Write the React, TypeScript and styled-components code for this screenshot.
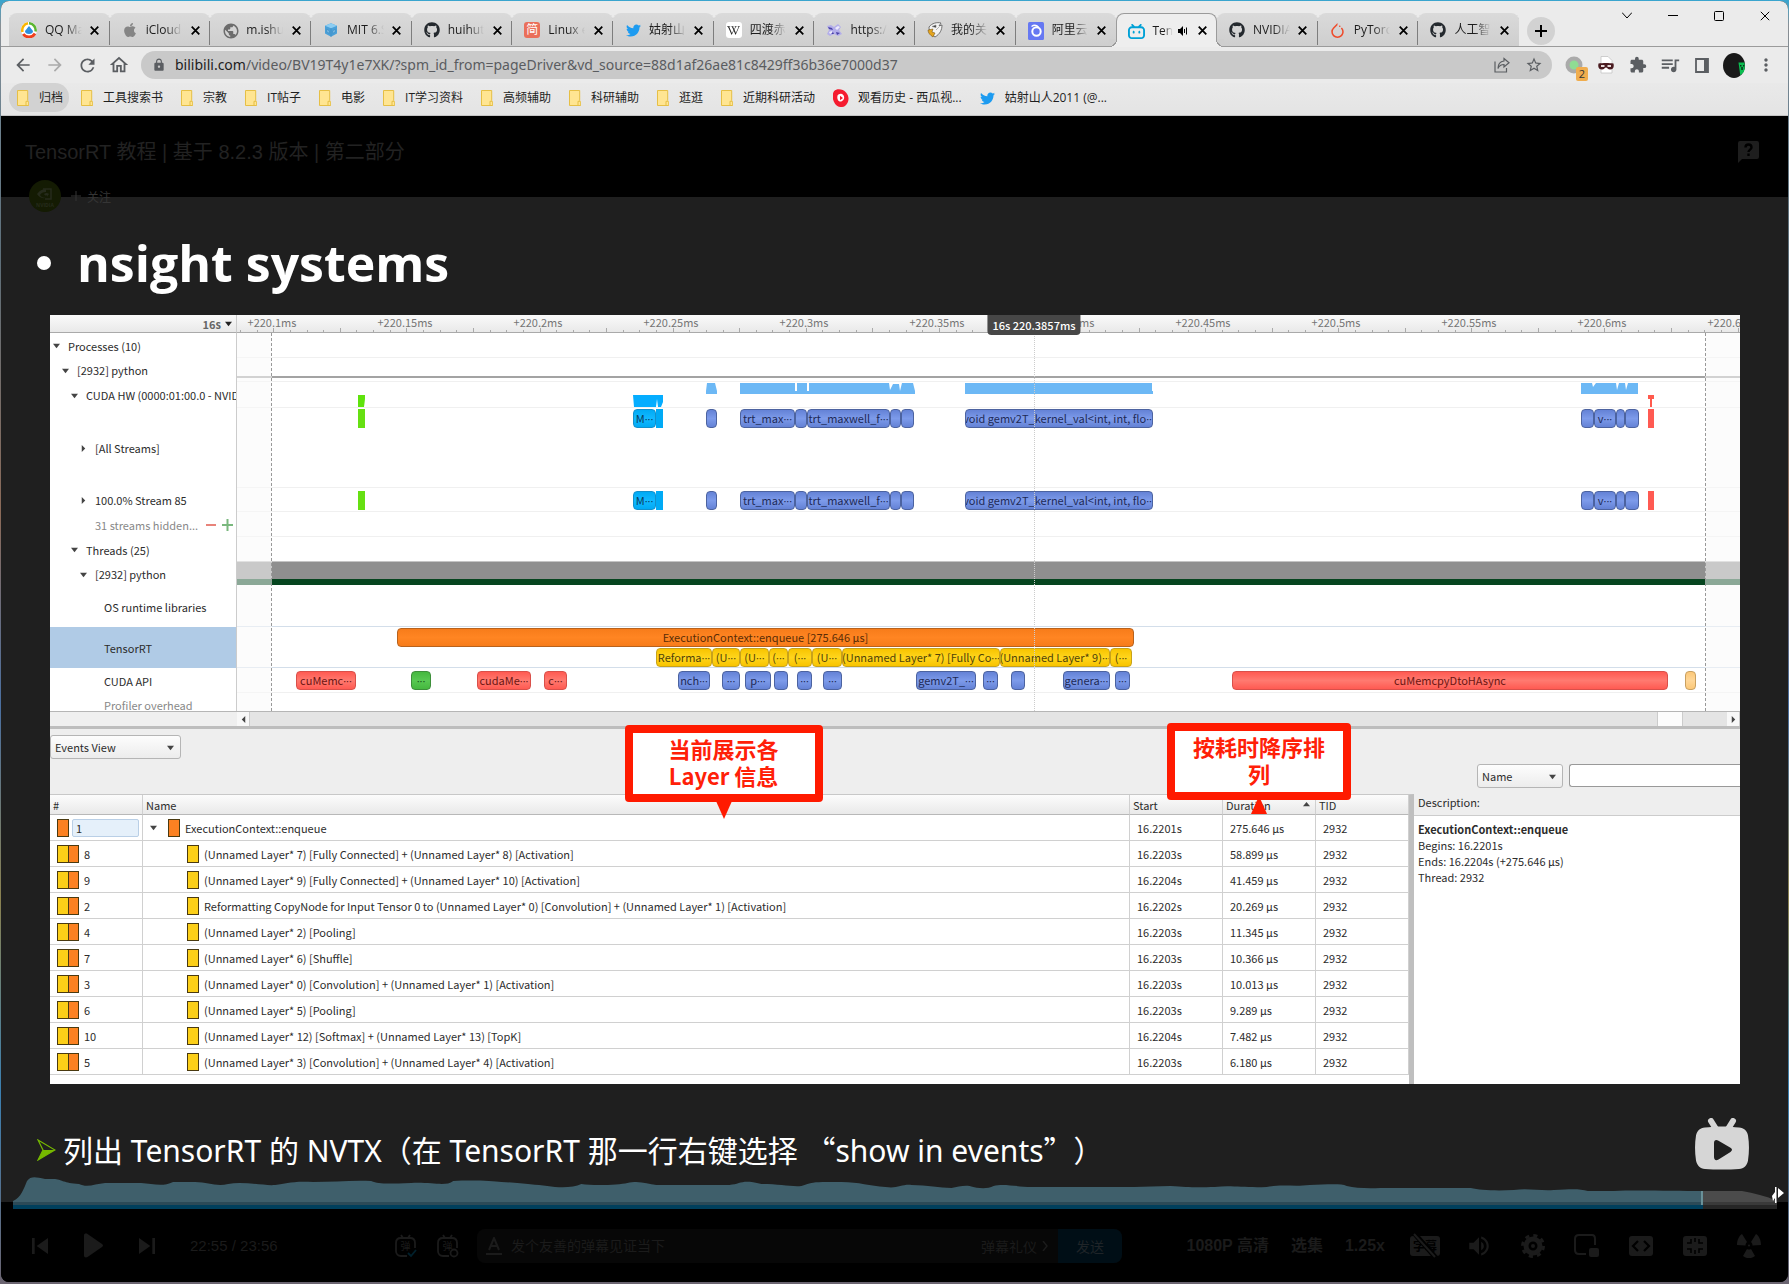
import React from 'react';
import styled, { createGlobalStyle, css } from 'styled-components';
import { FaApple, FaGithub, FaTwitter, FaWikipediaW } from 'react-icons/fa';
import { SiBilibili, SiPytorch } from 'react-icons/si';
import {
  MdArrowBack,
  MdArrowForward,
  MdRefresh,
  MdOutlineHome,
  MdLock,
  MdStarOutline,
  MdExtension,
  MdOutlineQueueMusic,
  MdMoreVert,
  MdPublic,
  MdSkipPrevious,
  MdSkipNext,
  MdVolumeUp,
} from 'react-icons/md';

const uiFont = '"Open Sans", "Noto Sans CJK SC", sans-serif';
const textFont = '"Noto Sans", "Noto Sans CJK SC", sans-serif';
const profilerFont = '"Noto Sans CJK SC", "Noto Sans", sans-serif';
const playerFont = '"Liberation Sans", "Noto Sans CJK SC", sans-serif';

const Global = createGlobalStyle`
  *, *::before, *::after { box-sizing: border-box; }
  html, body { margin: 0; }
  body { font-family: ${uiFont}; font-size: 12px; background: #7d8a94; }
  button, input, select { font: inherit; color: inherit; margin: 0; padding: 0; border: 0; background: none; }
  button { cursor: pointer; }
  svg { display: block; flex: none; }
`;

/* ---------- window and browser chrome ---------- */

const Desktop = styled.div`
  display: flex;
  min-height: 100vh;
  padding: 1px 1px 2px;
  background: linear-gradient(180deg, #38a5cf 0, #8a8f94 2%, #6f8390 8%, #5d6f7a 20%, #8b6a58 40%, #4a6fa0 55%, #8a8150 70%, #3b7fb0 85%, #6b6470 100%);
`;

const Window = styled.div`
  display: flex;
  flex: 1;
  flex-direction: column;
  min-width: 0;
  overflow: hidden;
  border-radius: 8px;
  background: #000;
`;

const TabStrip = styled.div`
  display: flex;
  height: 46px;
  padding-left: 8px;
  align-items: stretch;
  background: #ebebeb;
  box-shadow: inset 0 -1px #9b9b9b;
`;

const Tabs = styled.div`
  display: flex;
  flex: 1;
  min-width: 0;
  padding-top: 12px;
`;

const Tab = styled.div<{ $active?: boolean; $divided?: boolean }>`
  position: relative;
  display: flex;
  flex: 1 1 0;
  min-width: 0;
  max-width: 240px;
  align-items: center;
  padding: 0 7px 0 12px;
  border-radius: 8px 8px 0 0;
  background: linear-gradient(#dadada, #cecece);
  box-shadow: inset 0 -1px #9b9b9b;
  ${p =>
    p.$divided &&
    css`
      &::after {
        content: '';
        position: absolute;
        right: 0;
        top: 8px;
        width: 1px;
        height: 24px;
        background: #7d7d7d;
      }
    `}
  ${p =>
    p.$active &&
    css`
      z-index: 1;
      background: #eeeeee;
      border: 1px solid #9b9b9b;
      border-bottom: 0;
      box-shadow: none;
      padding: 0 6px 0 11px;
      &::before,
      &::after {
        content: '';
        position: absolute;
        bottom: 0;
        width: 8px;
        height: 8px;
      }
      &::before {
        left: -8px;
        background: radial-gradient(circle at 0 0, #cfcfcf 7px, #9b9b9b 7px, #9b9b9b 8px, #eeeeee 8px);
      }
      &::after {
        right: -8px;
        background: radial-gradient(circle at 100% 0, #cfcfcf 7px, #9b9b9b 7px, #9b9b9b 8px, #eeeeee 8px);
      }
    `}
`;

const Favicon = styled.span`
  display: grid;
  flex: none;
  width: 16px;
  height: 16px;
  margin-right: 8px;
  place-items: center;
`;

const Tile = styled.span<{ $bg: string; $fg: string }>`
  display: grid;
  width: 16px;
  height: 16px;
  place-items: center;
  border-radius: 3px;
  background: ${p => p.$bg};
  color: ${p => p.$fg};
  font-size: 12px;
  line-height: 16px;
`;

const TabTitle = styled.span`
  flex: 1;
  min-width: 0;
  margin-right: 5px;
  overflow: hidden;
  white-space: nowrap;
  line-height: 20px;
  color: #1c1c1c;
  mask-image: linear-gradient(90deg, #000 55%, transparent);
`;

const SpeakerIcon = styled.svg`
  margin-right: 6px;
`;

const TabClose = styled.button`
  display: grid;
  flex: none;
  width: 16px;
  height: 16px;
  place-items: center;
`;

const NewTab = styled.button`
  display: grid;
  flex: none;
  align-self: flex-end;
  width: 28px;
  height: 28px;
  margin: 0 49px 2px 8px;
  place-items: center;
  border-radius: 50%;
  background: #d2d2d2;
`;

const WindowButton = styled.button`
  display: grid;
  flex: none;
  width: 46px;
  height: 29px;
  place-items: center;
`;

const Toolbar = styled.div`
  display: flex;
  height: 36px;
  align-items: center;
  padding: 0 6px;
  background: #ebebeb;
  color: #5b5e62;
`;

const ToolButton = styled.button<{ $dim?: boolean }>`
  display: grid;
  flex: none;
  width: 32px;
  height: 28px;
  place-items: center;
  color: ${p => (p.$dim ? '#ababab' : 'inherit')};
`;

const Omnibox = styled.div`
  display: flex;
  flex: 1;
  min-width: 0;
  height: 28px;
  margin: 0 6px;
  align-items: center;
  gap: 9px;
  padding: 0 2px 0 11px;
  border-radius: 14px;
  background: #c9c9c9;
`;

const Address = styled.div`
  flex: 1;
  min-width: 0;
  overflow: hidden;
  white-space: nowrap;
  font-family: ${textFont};
  font-size: 14px;
  line-height: 20px;
  color: #5a5c60;
  b {
    font-weight: 400;
    color: #1d1d1d;
  }
`;

const Badge = styled.span`
  position: absolute;
  right: 2px;
  bottom: -2px;
  width: 12px;
  height: 14px;
  border-radius: 2px;
  background: #f0ad4e;
  color: #333;
  font-size: 11px;
  line-height: 14px;
  text-align: center;
`;

const BadgeAnchor = styled.span`
  position: relative;
  display: grid;
  width: 32px;
  height: 28px;
  place-items: center;
`;

const Bookmarks = styled.nav`
  display: flex;
  height: 33px;
  align-items: flex-start;
  gap: 4px;
  padding-left: 8px;
  background: linear-gradient(#e9e9e9, #e4e4e4);
  border-bottom: 1px solid #c4c4c4;
`;

const Bookmark = styled.a<{ $hover?: boolean; $site?: boolean }>`
  display: flex;
  flex: none;
  height: 29px;
  align-items: center;
  gap: ${p => (p.$site ? 9 : 6)}px;
  padding: 1px 6px 0 8px;
  border-radius: 14px;
  background: ${p => (p.$hover ? '#d2d2d2' : 'transparent')};
  color: #1f1f1f;
  line-height: 20px;
  text-decoration: none;
  white-space: nowrap;
`;

const BookmarkIcon = styled.span`
  display: flex;
  width: 16px;
  height: 16px;
  align-items: center;
`;

/* ---------- player ---------- */

const Stage = styled.main`
  display: flex;
  flex: 1;
  flex-direction: column;
  background: linear-gradient(#000 81px, #1f1f1f 81px, #1f1f1f calc(100% - 80px), #000 calc(100% - 80px));
`;

const VideoHead = styled.header`
  display: flex;
  align-items: center;
  justify-content: space-between;
  height: 64px;
  padding: 8px 29px 0 24px;
  color: #222;
  font-family: ${playerFont};
`;

const VideoTitle = styled.h1`
  margin: 0;
  font-size: 20px;
  font-weight: 400;
  line-height: 28px;
`;

const Uploader = styled.div`
  display: flex;
  align-items: center;
  height: 32px;
  padding-left: 28px;
  gap: 10px;
`;

const FollowButton = styled.button`
  display: flex;
  align-items: center;
  gap: 6px;
  color: #353535;
  font-family: ${playerFont};
  font-size: 12px;
`;

const SlideTitle = styled.h2`
  display: flex;
  align-items: center;
  gap: 26px;
  height: 103px;
  margin: 0;
  padding: 0 36px 2px;
  color: #fff;
  font-family: ${uiFont};
  font-size: 50px;
  font-weight: 700;
  line-height: 64px;
`;

const Bullet = styled.span`
  width: 14px;
  height: 14px;
  border-radius: 50%;
  background: #fff;
`;

const CaptionRow = styled.div`
  display: flex;
  flex: 1;
  align-items: center;
  gap: 7px;
  padding: 30px 39px 0 36px;
`;

const Caption = styled.div`
  display: flex;
  flex: 1;
  align-items: center;
  gap: 7px;
  padding-top: 9px;
  p {
    margin: 0;
    color: #fff;
    font-family: ${textFont};
    font-size: 30px;
    line-height: 44px;
    text-spacing-trim: space-all;
  }
`;

const WideQuote = styled.span`
  font-family: ${profilerFont};
`;

const WaveTrack = styled.div`
  display: grid;
  margin: 0 11px 0 12px;
  > * {
    grid-area: 1 / 1;
    width: 100%;
    height: 33px;
  }
  svg {
    overflow: visible;
  }
  input {
    opacity: 0;
    cursor: pointer;
  }
`;

const Controls = styled.div`
  display: flex;
  height: 73px;
  align-items: center;
  padding: 0 12px 0 16px;
  color: #1b1b1b;
  font-family: ${playerFont};
`;

const ControlButton = styled.button<{ $width: number }>`
  display: grid;
  flex: none;
  width: ${p => p.$width}px;
  height: 32px;
  place-items: center;
`;

const Time = styled.span`
  flex: none;
  width: 214px;
  padding-left: 19px;
  font-size: 15px;
  white-space: nowrap;
`;

const Danmaku = styled.form`
  display: flex;
  flex: 1;
  max-width: 645px;
  height: 34px;
  margin-left: 8px;
  align-items: center;
  overflow: hidden;
  border-radius: 8px;
  background: #070707;
  font-size: 14px;
`;

const FontMark = styled.span`
  display: grid;
  flex: none;
  width: 34px;
  place-items: center;
`;

const DanmakuInput = styled.input`
  flex: 1;
  min-width: 0;
  height: 34px;
  &::placeholder {
    color: #1b1b1b;
    opacity: 1;
  }
`;

const Etiquette = styled.a`
  display: flex;
  align-items: center;
  gap: 5px;
  padding-right: 10px;
  color: #1b1b1b;
  text-decoration: none;
`;

const Send = styled.button`
  width: 64px;
  height: 34px;
  background: #000e16;
  color: #1f2428;
`;

const RightControls = styled.div`
  display: flex;
  flex: none;
  align-items: center;
  margin-left: auto;
`;

const TextControls = styled.div`
  display: flex;
  gap: 22px;
  margin-right: 13px;
`;

const TextControl = styled.button`
  flex: none;
  font-size: 16px;
  font-weight: 700;
  line-height: 24px;
`;

/* ---------- profiler ---------- */

const Profiler = styled.section`
  position: relative;
  margin: 0 48px 0 49px;
  background: #eee;
  color: #2c2c2c;
  font-family: ${profilerFont};
  font-size: 11px;
  line-height: 16px;
`;

const SplitRow = styled.div`
  display: flex;
`;

const RulerCorner = styled.div`
  display: flex;
  flex: none;
  width: 187px;
  height: 18px;
  align-items: center;
  justify-content: flex-end;
  gap: 4px;
  padding-right: 4px;
  border-right: 1px solid #ccc;
  border-bottom: 1px solid #aaa;
  background: linear-gradient(#fafafa, #e9e9e9);
  color: #666;
  font-weight: 700;
`;

const Ruler = styled.div`
  position: relative;
  flex: 1;
  height: 18px;
  overflow: hidden;
  border-bottom: 1px solid #aaa;
  background: linear-gradient(#fafafa, #e9e9e9);
`;

const RulerLabel = styled.span`
  position: absolute;
  top: 0;
  transform: translateX(-50%);
  color: #757575;
  line-height: 14px;
`;

const Tick = styled.i<{ $h: number }>`
  position: absolute;
  bottom: 0;
  width: 1px;
  height: ${p => p.$h}px;
  background: #aaa;
`;

const CursorTime = styled.span`
  position: absolute;
  z-index: 2;
  top: 0;
  height: 20px;
  padding: 0 5px;
  transform: translateX(-50%);
  border-radius: 0 0 4px 4px;
  background: #474747;
  color: #fff;
  font-weight: 500;
  line-height: 20px;
  white-space: nowrap;
`;

const Tree = styled.div`
  flex: none;
  width: 187px;
  height: 378px;
  overflow: hidden;
  border-right: 1px solid #ccc;
  background: #fff;
`;

const TreeRow = styled.div<{ $h: number; $depth: number; $selected?: boolean; $dim?: boolean }>`
  display: flex;
  height: ${p => p.$h}px;
  align-items: center;
  gap: 8px;
  padding-left: ${p => 2 + p.$depth * 9}px;
  background: ${p => (p.$selected ? '#b0cbe6' : 'transparent')};
  color: ${p => (p.$dim ? '#888' : '#2c2c2c')};
  white-space: nowrap;
`;

const Twisty = styled.span`
  display: grid;
  flex: none;
  width: 8px;
  place-items: center;
`;

const Lanes = styled.div`
  position: relative;
  flex: 1;
  height: 378px;
  overflow: hidden;
  background: #fff;
`;

const Lane = styled.div<{ $h: number; $line: string }>`
  position: relative;
  height: ${p => p.$h}px;
  border-bottom: 1px solid ${p => p.$line};
`;

const barColors = {
  blue: ['#6482d6', '#7d9bea', '#4c63a0', '#1e2a57'],
  green: ['#45b83f', '#58c852', '#3d8f3a', '#15501a'],
  lime: ['#66e012', '#66e012', '#66e012', '#15501a'],
  red: ['#ff5a52', '#ff7a70', '#d9504a', '#6b1512'],
  orange: ['#f77c1a', '#ff8522', '#b8621c', '#5a2c05'],
  yellow: ['#f8c400', '#ffd51c', '#c8a21a', '#4f4208'],
  cream: ['#fcc878', '#ffd798', '#c9a060', '#6b4a10'],
  cyan: ['#00aaf5', '#12b9ff', '#1290cc', '#073c60'],
};

type BarColor = keyof typeof barColors;

const Bar = styled.span<{ $c: BarColor; $top: number; $flat?: boolean }>`
  position: absolute;
  top: ${p => p.$top}px;
  display: flex;
  height: 19px;
  align-items: center;
  justify-content: center;
  overflow: hidden;
  color: ${p => barColors[p.$c][3]};
  line-height: 17px;
  white-space: nowrap;
  ${p =>
    p.$flat
      ? css`
          background: ${barColors[p.$c][0]};
        `
      : css`
          border: 1px solid ${barColors[p.$c][2]};
          border-radius: 4px;
          background: linear-gradient(${barColors[p.$c][0]}, ${barColors[p.$c][1]} 50%, ${barColors[p.$c][0]});
        `}
`;

/* The dots sit at half height and stay narrow, so they use the Latin family. */
const Dots = styled.span`
  font-family: ${uiFont};
`;

const LoadLine = styled.div`
  height: 20px;
  border-bottom: 2px solid #a3a3a3;
`;

const CpuBand = styled.div`
  height: 17px;
  background: #8f8f8f;
`;

const StateBand = styled.div`
  height: 6px;
  background: #06451f;
`;

const Utilization = styled.svg`
  width: 100%;
  height: 25px;
`;

const Outside = styled.div<{ $side: 'left' | 'right' }>`
  position: absolute;
  top: 0;
  bottom: 0;
  ${p => p.$side}: 0;
  width: 35px;
  border-${p => (p.$side === 'left' ? 'right' : 'left')}: 1px dashed #999;
  background: rgba(250, 250, 250, 0.55);
`;

const CursorLine = styled.div`
  position: absolute;
  top: 0;
  bottom: 0;
  border-left: 1px dotted #ccc;
`;

const ScrollCorner = styled.div`
  flex: none;
  width: 187px;
`;

const ScrollRow = styled.div`
  display: flex;
  height: 18px;
  border-top: 1px solid #b5b5b5;
  border-bottom: 3px solid #bdbdbd;
  background: #efefef;
`;

const ScrollTrack = styled.div`
  flex: 1;
  background: #e4e4e4;
`;

const ScrollGap = styled.div`
  flex: none;
  width: 44px;
  background: #e4e4e4;
`;

const ScrollThumb = styled.div`
  flex: none;
  width: 26px;
  border: solid #ccc;
  border-width: 0 1px;
  background: #fcfcfc;
`;

const ScrollButton = styled.button`
  display: grid;
  flex: none;
  width: 13px;
  place-items: center;
  border-right: 1px solid #ccc;
  background: #f8f8f8;
`;

const EventsBar = styled.div`
  display: flex;
  height: 65px;
  justify-content: space-between;
  padding-top: 6px;
`;

const Filters = styled.div`
  display: flex;
  gap: 6px;
  padding-top: 29px;
`;

const Combo = styled.label<{ $w: number }>`
  display: grid;
  width: ${p => p.$w}px;
  height: 24px;
  align-items: center;
  border: 1px solid #b5b5b5;
  border-radius: 3px;
  background: linear-gradient(#fdfdfd, #ececec);
  select,
  svg {
    grid-area: 1 / 1;
  }
  select {
    width: 100%;
    height: 22px;
    padding: 0 4px;
    appearance: none;
  }
  svg {
    justify-self: end;
    margin-right: 6px;
    pointer-events: none;
  }
`;

const FilterInput = styled.input`
  width: 171px;
  height: 23px;
  border: 1px solid #999;
  border-right: 0;
  border-radius: 3px 0 0 3px;
  background: #fff;
`;

const EventsArea = styled.div`
  display: grid;
  grid-template-columns: minmax(0, 1fr) 326px;
  min-height: 290px;
`;

const TableWrap = styled.div`
  border-top: 1px solid #c8c8c8;
  border-right: 5px solid #bfbfbf;
  background: #fff;
`;

const Table = styled.table`
  width: 100%;
  border-spacing: 0;
  table-layout: fixed;
  th {
    height: 20px;
    padding: 0 2px 0 3px;
    border-right: 1px solid #d0d0d0;
    border-bottom: 1px solid #b8b8b8;
    background: linear-gradient(#fcfcfc, #e9e9e9);
    font-weight: 400;
    text-align: left;
  }
  td {
    height: 26px;
    padding: 0 7px;
    border-right: 1px solid #d0d0d0;
    border-bottom: 1px solid #d0d0d0;
    white-space: nowrap;
  }
`;

const Cell = styled.div<{ $indent?: number; $gap?: number }>`
  display: flex;
  align-items: center;
  gap: ${p => p.$gap ?? 5}px;
  padding-left: ${p => p.$indent ?? 0}px;
`;

const SortHead = styled.div`
  display: flex;
  align-items: center;
  justify-content: space-between;
  padding-right: 3px;
`;

const Swatches = styled.span`
  display: flex;
  flex: none;
  border: 1px solid #4a3a10;
`;

const Swatch = styled.i<{ $c: string }>`
  width: 10px;
  height: 16px;
  background: ${p => p.$c};
  & + & {
    border-left: 1px solid #4a3a10;
  }
`;

const RowNumber = styled.input`
  width: 67px;
  height: 18px;
  padding-left: 3px;
  border: 1px solid #b9cfe6;
  border-radius: 2px;
  background: #e5f0fa;
`;

const Description = styled.div`
  display: flex;
  flex-direction: column;
`;

const DescriptionLabel = styled.div`
  height: 22px;
  padding: 0 4px;
  border-bottom: 1px solid #ccc;
`;

const DescriptionBody = styled.div`
  flex: 1;
  padding: 5px 4px;
  background: #fff;
`;

const Callout = styled.div<{ $w: number }>`
  position: absolute;
  z-index: 3;
  width: ${p => p.$w}px;
  height: 77px;
  padding: 2px 16px;
  border: 8px solid #ff1a00;
  border-radius: 4px;
  background: #fff;
  color: #ff2008;
  font-size: 22px;
  font-weight: 700;
  line-height: 27px;
  text-align: center;
`;

const Pointer = styled.i<{ $dir: 'up' | 'down' }>`
  position: absolute;
  top: ${p => (p.$dir === 'down' ? 68 : 65)}px;
  left: calc(50% - 8px);
  border: 8px solid transparent;
  ${p => (p.$dir === 'down' ? 'border-top: 18px solid #ff1a00; border-bottom: 0;' : 'border-bottom: 18px solid #ff1a00; border-top: 0;')}
`;

const CalloutLeft = styled(Callout)`
  top: 410px;
  left: 34%;
`;

const CalloutRight = styled(Callout)`
  top: 408px;
  left: 66.1%;
`;

const CursorAnchor = styled.div`
  position: absolute;
  z-index: 2;
  top: 0;
  left: 187px;
  right: 0;
`;

/* ---------- data ---------- */

/* Width of the visible time range, in the units used by the bars below. */
const SPAN = 1503;
const pct = (v: number) => `${(v / SPAN) * 100}%`;

type BarData = [start: number, end: number, color: BarColor, label?: string, flat?: boolean];

const kernelBars: BarData[] = [
  [121, 128, 'lime', '', true],
  [396, 419, 'cyan', 'M···'],
  [419, 426, 'cyan', '', true],
  [469, 480, 'blue'],
  [503, 558, 'blue', 'trt_max···'],
  [558, 570, 'blue'],
  [570, 653, 'blue', 'trt_maxwell_f···'],
  [653, 664, 'blue'],
  [664, 677, 'blue'],
  [728, 916, 'blue', 'void gemv2T_kernel_val<int, int, flo···'],
  [1344, 1357, 'blue'],
  [1357, 1379, 'blue', 'v···'],
  [1379, 1388, 'blue'],
  [1388, 1402, 'blue'],
  [1411, 1417, 'red', '', true],
];

const trtBars: BarData[] = [[160, 897, 'orange', 'ExecutionContext::enqueue [275.646 µs]']];

const layerBars: BarData[] = [
  [419, 475, 'yellow', 'Reforma···'],
  [475, 503, 'yellow', '(U···'],
  [503, 532, 'yellow', '(U···'],
  [532, 551, 'yellow', '(···'],
  [551, 575, 'yellow', '(···'],
  [575, 605, 'yellow', '(U···'],
  [605, 763, 'yellow', '(Unnamed Layer* 7) [Fully Co···'],
  [763, 873, 'yellow', '(Unnamed Layer* 9)···'],
  [873, 895, 'yellow', '(···'],
];

const apiBars: BarData[] = [
  [59, 119, 'red', 'cuMemc···'],
  [174, 194, 'green', '···'],
  [240, 294, 'red', 'cudaMe···'],
  [307, 330, 'red', 'c···'],
  [441, 473, 'blue', 'nch···'],
  [485, 503, 'blue', '···'],
  [508, 534, 'blue', 'p···'],
  [537, 551, 'blue'],
  [560, 575, 'blue', '···'],
  [586, 605, 'blue', '···'],
  [679, 739, 'blue', 'gemv2T_···'],
  [746, 761, 'blue', '···'],
  [774, 788, 'blue'],
  [826, 873, 'blue', 'genera···'],
  [878, 893, 'blue', '···'],
  [995, 1431, 'red', 'cuMemcpyDtoHAsync'],
  [1448, 1459, 'cream'],
];

const treeRows = [
  { h: 25, depth: 0, label: 'Processes (10)', open: true },
  { h: 24, depth: 1, label: '[2932] python', open: true },
  { h: 26, depth: 2, label: 'CUDA HW (0000:01:00.0 - NVIDIA', open: true },
  { h: 80, depth: 3, label: '[All Streams]', open: false },
  { h: 24, depth: 3, label: '100.0% Stream 85', open: false },
  { h: 25, depth: 3, label: '31 streams hidden...', dim: true, extra: true },
  { h: 25, depth: 2, label: 'Threads (25)', open: true },
  { h: 24, depth: 3, label: '[2932] python', open: true },
  { h: 41, depth: 4, label: 'OS runtime libraries' },
  { h: 41, depth: 4, label: 'TensorRT', selected: true },
  { h: 25, depth: 4, label: 'CUDA API' },
  { h: 24, depth: 4, label: 'Profiler overhead', dim: true },
];

const rulerLabels = [
  '+220.1ms', '+220.15ms', '+220.2ms', '+220.25ms', '+220.3ms', '+220.35ms',
  '+220.4ms', '+220.45ms', '+220.5ms', '+220.55ms', '+220.6ms', '+220.65ms',
];

const events = [
  ['8', '(Unnamed Layer* 7) [Fully Connected] + (Unnamed Layer* 8) [Activation]', '16.2203s', '58.899 µs'],
  ['9', '(Unnamed Layer* 9) [Fully Connected] + (Unnamed Layer* 10) [Activation]', '16.2204s', '41.459 µs'],
  ['2', 'Reformatting CopyNode for Input Tensor 0 to (Unnamed Layer* 0) [Convolution] + (Unnamed Layer* 1) [Activation]', '16.2202s', '20.269 µs'],
  ['4', '(Unnamed Layer* 2) [Pooling]', '16.2203s', '11.345 µs'],
  ['7', '(Unnamed Layer* 6) [Shuffle]', '16.2203s', '10.366 µs'],
  ['3', '(Unnamed Layer* 0) [Convolution] + (Unnamed Layer* 1) [Activation]', '16.2203s', '10.013 µs'],
  ['6', '(Unnamed Layer* 5) [Pooling]', '16.2203s', '9.289 µs'],
  ['10', '(Unnamed Layer* 12) [Softmax] + (Unnamed Layer* 13) [TopK]', '16.2204s', '7.482 µs'],
  ['5', '(Unnamed Layer* 3) [Convolution] + (Unnamed Layer* 4) [Activation]', '16.2203s', '6.180 µs'],
];

/* ---------- icons ---------- */

const Cross = ({ size = 9, weight = 2 }: { size?: number; weight?: number }) => (
  <svg width={size} height={size} viewBox="0 0 10 10" stroke="#000" strokeWidth={weight} fill="none">
    <path d="M.8.8l8.4 8.4M9.2.8L.8 9.2" />
  </svg>
);

const Caret = ({ dir = 'down', size = 7, color = '#444' }: { dir?: 'down' | 'right' | 'left' | 'up'; size?: number; color?: string }) => (
  <svg width={size} height={size} viewBox="0 0 8 8" fill={color}>
    <path d={{ down: 'M0 2h8L4 7z', up: 'M0 6h8L4 1z', right: 'M2 0v8l4-4z', left: 'M6 0v8L2 4z' }[dir]} />
  </svg>
);

const Folder = () => (
  <svg width="12" height="16" viewBox="0 0 12 16">
    <path d="M.5.5h10.2v10l1 1v4H.5z" fill="#ffe592" stroke="#e6bf45" />
    <path d="M9 15.500v-4.200h2" fill="none" stroke="#e6bf45" />
  </svg>
);

const QqMail = () => (
  <svg width="16" height="16" viewBox="0 0 16 16" fill="none">
    <circle cx="8" cy="8" r="8" fill="#fff" />
    <path d="M1.500 10A7 7 0 0 1 7 1.300" stroke="#fbb500" strokeWidth="2.500" />
    <path d="M8 1.200A7 7 0 0 1 14.500 9.500" stroke="#5cb531" strokeWidth="2.500" />
    <path d="M14 11.500A7 7 0 0 1 2.200 12" stroke="#f0401e" strokeWidth="2.800" />
    <path d="M8 4l4 5a4 3 0 0 1-8 0z" fill="#2b8fe0" />
  </svg>
);

const Cube = () => (
  <svg width="12" height="14" viewBox="0 0 14 16">
    <path d="M7 0l7 3v9l-7 4-7-4V3z" fill="#4aa0d8" />
    <path d="M7 0l7 3-7 3-7-3z" fill="#8ccdf2" />
    <path d="M7 6v10M2 7l3 2v3l-3-2zM9 9l3-2v3l-3 2z" stroke="#3a88c0" fill="#7fc0e8" strokeWidth=".7" />
  </svg>
);

const Flower = () => (
  <svg width="16" height="14" viewBox="0 0 16 14">
    <path d="M1 3l4-1 3 2 4-3 3 3-2 3 3 4-4 2-4-2-4 2-3-2 2-4z" fill="#b3aeea" />
    <path d="M2 4l4 1 1 2-4-1zM10 9l4 1-3 2zM5 11l2-2 1 2z" fill="#4b42a8" />
    <path d="M9 5l3-2 2 1-3 3zM3 9l3-1 0 2-2 1z" fill="#eceafb" />
  </svg>
);

const Bird = () => (
  <svg width="16" height="16" viewBox="0 0 16 16">
    <path d="M2 5c3-4 8-5 12-4l-2 3 3-1c0 5-2 9-7 12-3-2-6-5-6-10z" fill="#f3f3f3" stroke="#666" strokeWidth=".9" />
    <path d="M1 8l5-1-1 3 3 1-2 4c-3-2-5-4-5-7z" fill="#e5a51e" stroke="#6a4a10" strokeWidth=".5" />
    <path d="M5 4.500l4-1.500v2.500zM9 8l3-3" fill="#333" stroke="#888" strokeWidth=".6" />
  </svg>
);

const Aliyun = () => (
  <svg width="16" height="18" viewBox="0 0 16 18" fill="none">
    <rect width="16" height="18" rx="1.500" fill="#6678f2" />
    <circle cx="8.500" cy="9.500" r="4.200" stroke="#fff" strokeWidth="2" />
    <path d="M3.500 4.500c2-1.500 5-1.500 7 .5" stroke="#fff" strokeWidth="1.400" />
  </svg>
);

const Xigua = () => (
  <svg width="16" height="18" viewBox="0 0 16 16" preserveAspectRatio="none">
    <path d="M1 2c3-3 9-2 12 1 4 4 3 9-1 12-3 2-8 1-10-2-3-4-3-8-1-11z" fill="#f51c30" />
    <path d="M5 5c2-1 4-1 5 0 2 2 1 4 0 5-2 2-4 1-5 0-1-2-1-4 0-5z" fill="#fff" />
    <path d="M7 6l3 2-3 2z" fill="#f51c30" />
  </svg>
);

const Share = () => (
  <svg width="16" height="16" viewBox="0 0 16 16" fill="none" stroke="#5b5e62" strokeWidth="1.200">
    <path d="M1 4.500v10.500h11.500v-4" />
    <path d="M10 1.500l5 4.200-5 4.200V7.500C7 7.500 5 9 4 11.500c0-4 2-7 6-7.500z" />
  </svg>
);

const SidePanel = () => (
  <svg width="14" height="15" viewBox="0 0 14 15">
    <path d="M1 1h12v13H1z" fill="none" stroke="#5b5e62" strokeWidth="1.800" />
    <path d="M9 1h4v13H9z" fill="#5b5e62" />
  </svg>
);

const Masked = () => (
  <svg width="16" height="18" viewBox="0 0 16 18">
    <path d="M3 .5h7l4 4V17H3z" fill="#fff" stroke="#c4c4c4" strokeWidth=".8" />
    <path d="M.5 7.500c4-.8 11-.8 15 0 .8 4-.2 6-3.500 6-2 0-3-2-4-2s-2 2-4 2c-3.300 0-4.300-2-3.500-6z" fill="#4a1b20" />
    <path d="M3 10h3.500M9.500 10H13" stroke="#e6dada" strokeWidth="2" />
  </svg>
);

const ProfileFace = () => (
  <svg width="22" height="25" viewBox="0 0 22 25">
    <ellipse cx="11" cy="12.500" rx="11" ry="12.500" fill="#191919" />
    <path d="M15.500 9.500h5.800c.8 3.500.6 7-1 10l-3 3z" fill="#0bbd50" />
    <path d="M17 12h1.500v1.500H17zM20 12h1.200v1.500H20zM18.300 14h1.500v3h-1.500z" fill="#0a3018" />
  </svg>
);

const HelpBubble = () => (
  <svg width="21" height="22" viewBox="0 0 21 22">
    <path d="M2 0h17a2 2 0 0 1 2 2v14a2 2 0 0 1-2 2H4l-4 4V2a2 2 0 0 1 2-2z" fill="#1e1e1e" />
    <path d="M7.500 6.500c0-4 6-4 6 0 0 2-3 2.200-3 4.500M10.500 12.500V15" fill="none" stroke="#000" strokeWidth="2.400" />
  </svg>
);

const Nvidia = () => (
  <svg width="32" height="32" viewBox="0 0 32 32">
    <circle cx="16" cy="16" r="16" fill="#141b03" />
    <path d="M8 14c3-4 6-5 9-5v3c-3 0-5 1-6 3 2 3 5 4 8 1-2-1-3 0-4-2 3-2 5 0 5 0-3 6-9 5-12 0z" fill="#262b1c" />
    <path d="M14 9h8v10h-6" fill="none" stroke="#262b1c" strokeWidth="1.500" />
    <text x="16" y="27" textAnchor="middle" fontSize="5" fontWeight="700" fill="#262b1c">NVIDIA</text>
  </svg>
);

const ListArrow = () => (
  <svg width="19" height="22" viewBox="0 0 19 22">
    <path d="M1 1l17 10L1 21l5-10z" fill="none" stroke="#76b900" strokeWidth="1.200" />
    <path d="M6 11h12L1 21z" fill="#76b900" />
  </svg>
);

const TvLogo = () => (
  <svg width="54" height="54" viewBox="0 0 54 54">
    <path d="M16 3l5 8M38 3l-5 8" stroke="#d6d6d6" strokeWidth="6" strokeLinecap="round" />
    <path
      fillRule="evenodd"
      d="M10 9.500C20 8 34 8 44 9.500c5 .5 8 3 9 8 1.300 8 1.300 16 0 25-.8 5-4 8-9 8.500-10 .8-24 .8-34 0-5-.5-8-3.500-9-8.500-1.300-9-1.300-17 0-25 1-5 4-7.500 9-8zM19 25v14c0 3 2 4 4.500 2.500l12-7.500c2-1.300 2-3 0-4.300l-12-7C21 21.200 19 22 19 25z"
      fill="#d6d6d6"
    />
  </svg>
);

const PlayIcon = () => (
  <svg width="19" height="25" viewBox="0 0 19 25">
    <path d="M0 2.500C0 .5 2 0 3.500 1L18 11c1.300 1 1.300 2 0 3L3.500 24C2 25 0 24.500 0 22.500z" fill="#1b1b1b" />
  </svg>
);

const DanmakuIcon = ({ mark }: { mark: 'check' | 'gear' }) => (
  <svg width="22" height="24" viewBox="0 0 22 24" fill="none" stroke="#1b1b1b" strokeWidth="1.800">
    <path d="M12 22H6c-3 0-5-2-5-5V9c0-3 2-5 5-5h9c3 0 5 2 5 5v5M6 1l2 3M15 1l-2 3" />
    <text x="10.500" y="16" textAnchor="middle" fontSize="10" fill="#1b1b1b" stroke="none">弹</text>
    {mark === 'check' ? <path d="M13 19l3 3 5-6" stroke="#00202c" /> : <circle cx="17" cy="19" r="3.500" />}
  </svg>
);

const SubtitleOff = () => (
  <svg width="30" height="26" viewBox="0 0 30 26">
    <rect y="3" width="30" height="20" rx="3" fill="#1b1b1b" />
    <text x="15" y="18" textAnchor="middle" fontSize="12" fontWeight="700" fill="#000">字幕</text>
    <path d="M4 0l22 25" stroke="#000" strokeWidth="5" />
    <path d="M4 1l21 23" stroke="#1b1b1b" strokeWidth="2" />
  </svg>
);

const GearIcon = () => (
  <svg width="24" height="24" viewBox="0 0 24 24">
    <circle cx="12" cy="12" r="10.500" fill="none" stroke="#1b1b1b" strokeWidth="3" strokeDasharray="4.100 4.147" />
    <circle cx="12" cy="12" r="7" fill="none" stroke="#1b1b1b" strokeWidth="5" />
    <circle cx="12" cy="12" r="2" fill="#1b1b1b" />
  </svg>
);

const PipIcon = () => (
  <svg width="26" height="24" viewBox="0 0 26 24" fill="none" stroke="#1b1b1b" strokeWidth="2">
    <path d="M12 20H5c-2 0-4-1-4-4V5c0-3 2-4 4-4h13c2 0 3 1 3 4v6" />
    <rect x="15" y="14" width="10" height="9" rx="2" fill="#1b1b1b" stroke="none" />
  </svg>
);

const WideIcon = () => (
  <svg width="24" height="20" viewBox="0 0 24 20">
    <rect width="24" height="20" rx="3" fill="#1b1b1b" />
    <path d="M9 5l-5 5 5 5M15 5l5 5-5 5" fill="none" stroke="#000" strokeWidth="2.200" />
  </svg>
);

const GridIcon = () => (
  <svg width="24" height="20" viewBox="0 0 24 20">
    <rect width="24" height="20" rx="3" fill="#1b1b1b" />
    <path d="M4 7h4V3M20 7h-4V3M4 13h4v4M20 13h-4v4M12 2v4M12 14v4" fill="none" stroke="#000" strokeWidth="1.600" />
  </svg>
);

const FanIcon = () => (
  <svg width="24" height="24" viewBox="0 0 24 24" fill="#1b1b1b">
    <path d="M5 0l5 8c-1 1-1.500 2-1.500 3.500L0 11C0 6 2 2 5 0zM19 0l-5 8c1 1 1.500 2 1.500 3.500L24 11c0-5-2-9-5-11zM10 15c1 .8 3 .8 4 0l4 7c-4 3-8 3-12 0z" />
    <circle cx="12" cy="11.500" r="1" />
  </svg>
);

const wavePoints =
  'M0 25C8 22 11 12 14 5C18 0 22 1 32 3H42C50 4 50 7 66 8C74 12 82 8 92 7H128C140 8 150 11 160 6H182C195 6 203 11 215 8C230 5 250 10 262 9C274 8 276 5 300 6C320 6 340 4 358 5C366 8 372 8 398 7C420 6 432 11 440 5C460 4 480 5 488 6C510 7 522 9 534 10C546 12 560 12 568 8C580 10 606 9 614 7C626 4 634 8 643 9H716C728 8 728 3 748 8C766 8 778 11 788 10C800 5 806 6 828 6C846 6 856 10 872 11C884 13 888 8 898 9C914 9 926 12 938 12C944 11 950 9 956 10C966 13 974 13 980 10C990 7 1004 11 1018 11H1088C1110 11 1130 11 1157 10C1180 12 1190 11 1201 11C1218 9 1230 12 1253 11C1268 8 1280 11 1296 9C1310 9 1326 7 1333 10C1344 13 1358 12 1378 12H1457C1466 14 1480 15 1500 14C1514 12 1526 15 1540 14C1560 13 1566 13 1574 15H1600C1620 14 1660 15 1689 15H1728C1740 17 1752 20 1763 25V33H0Z';

const tabs: { title: string; icon: React.ReactNode; active?: boolean }[] = [
  { title: 'QQ Mail', icon: <QqMail /> },
  { title: 'iCloud', icon: <FaApple size={16} color="#858585" /> },
  { title: 'm.ishuo', icon: <MdPublic size={18} color="#6c6c6c" /> },
  { title: 'MIT 6.S', icon: <Cube /> },
  { title: 'huihut', icon: <FaGithub size={16} color="#24292e" /> },
  { title: 'Linux e', icon: <Tile $bg="#ea6f5a" $fg="#fff">简</Tile> },
  { title: '姑射山', icon: <FaTwitter size={15} color="#1d9bf0" /> },
  { title: '四渡赤', icon: <Tile $bg="#fff" $fg="#222"><FaWikipediaW size={13} /></Tile> },
  { title: 'https:/', icon: <Flower /> },
  { title: '我的关', icon: <Bird /> },
  { title: '阿里云', icon: <Aliyun /> },
  { title: 'Ten', icon: <SiBilibili size={17} color="#00a1d6" />, active: true },
  { title: 'NVIDIA', icon: <FaGithub size={16} color="#24292e" /> },
  { title: 'PyTorc', icon: <SiPytorch size={15} color="#ee4c2c" /> },
  { title: '人工智', icon: <FaGithub size={16} color="#24292e" /> },
];

const bookmarks: [string, React.ReactNode?][] = [
  ['归档'], ['工具搜索书'], ['宗教'], ['IT帖子'], ['电影'], ['IT学习资料'], ['高频辅助'], ['科研辅助'], ['逛逛'], ['近期科研活动'],
  ['观看历史 - 西瓜视...', <Xigua key="x" />],
  ['姑射山人2011 (@...', <FaTwitter key="t" size={15} color="#1d9bf0" />],
];

/* ---------- sections ---------- */

function Browser() {
  return (
    <>
      <TabStrip>
        <Tabs>
          {tabs.map((t, i) => (
            <Tab key={i} $active={t.active} $divided={!t.active && i < tabs.length - 1 && !tabs[i + 1].active}>
              <Favicon>{t.icon}</Favicon>
              <TabTitle>{t.title}</TabTitle>
              {t.active && (
                <SpeakerIcon width="10" height="10" viewBox="0 0 10 10">
                  <path d="M0 3h2l3-3v10L2 7H0z" />
                  <path d="M6.500 3v4M8.500 1.500v7" stroke="#000" />
                </SpeakerIcon>
              )}
              <TabClose aria-label="Close tab">
                <Cross />
              </TabClose>
            </Tab>
          ))}
        </Tabs>
        <NewTab aria-label="New tab">
          <svg width="12" height="12" viewBox="0 0 12 12">
            <path d="M6 0v12M0 6h12" stroke="#000" strokeWidth="2" />
          </svg>
        </NewTab>
        <WindowButton aria-label="Search tabs">
          <svg width="10" height="7" viewBox="0 0 10 7">
            <path d="M0 .5l5 5.500 5-5.500" fill="none" stroke="#000" />
          </svg>
        </WindowButton>
        <WindowButton aria-label="Minimize">
          <svg width="10" height="1" viewBox="0 0 10 1">
            <path d="M0 0h10v1H0z" />
          </svg>
        </WindowButton>
        <WindowButton aria-label="Maximize">
          <svg width="10" height="10" viewBox="0 0 10 10">
            <rect x=".5" y=".5" width="9" height="9" rx="1" fill="none" stroke="#000" />
          </svg>
        </WindowButton>
        <WindowButton aria-label="Close">
          <Cross size={10} weight={1} />
        </WindowButton>
      </TabStrip>
      <Toolbar>
        <ToolButton aria-label="Back"><MdArrowBack size={20} /></ToolButton>
        <ToolButton aria-label="Forward" $dim><MdArrowForward size={20} /></ToolButton>
        <ToolButton aria-label="Reload"><MdRefresh size={21} /></ToolButton>
        <ToolButton aria-label="Home"><MdOutlineHome size={22} /></ToolButton>
        <Omnibox>
          <MdLock size={14} />
          <Address>
            <b>bilibili.com</b>/video/BV19T4y1e7XK/?spm_id_from=pageDriver&amp;vd_source=88d1af26ae81c8429ff36b36e7000d37
          </Address>
          <SplitRow>
            <ToolButton aria-label="Share"><Share /></ToolButton>
            <ToolButton aria-label="Bookmark"><MdStarOutline size={18} /></ToolButton>
          </SplitRow>
        </Omnibox>
        <ToolButton aria-label="Extension, 2 notices">
          <BadgeAnchor>
            <svg width="18" height="18" viewBox="0 0 18 18">
              <circle cx="9" cy="9" r="6.500" fill="#8fdc93" stroke="#aaa" strokeWidth="4" />
            </svg>
            <Badge>2</Badge>
          </BadgeAnchor>
        </ToolButton>
        <ToolButton aria-label="Masked page"><Masked /></ToolButton>
        <ToolButton aria-label="Extensions"><MdExtension size={18} /></ToolButton>
        <ToolButton aria-label="Media"><MdOutlineQueueMusic size={22} /></ToolButton>
        <ToolButton aria-label="Side panel"><SidePanel /></ToolButton>
        <ToolButton aria-label="Profile"><ProfileFace /></ToolButton>
        <ToolButton aria-label="Menu"><MdMoreVert size={20} /></ToolButton>
      </Toolbar>
      <Bookmarks>
        {bookmarks.map(([label, icon], i) => (
          <Bookmark key={label} href="#" $hover={i === 0} $site={Boolean(icon)}>
            <BookmarkIcon>{icon ?? <Folder />}</BookmarkIcon>
            {label}
          </Bookmark>
        ))}
      </Bookmarks>
    </>
  );
}

const Bars = ({ data, top }: { data: BarData[]; top: number }) => (
  <>
    {data.map(([start, end, color, label = '', flat]) => (
      <Bar key={start} $c={color} $top={top} $flat={flat} style={{ left: pct(start), width: pct(end - start) }}>
        {label.replace('···', '')}
        {label.endsWith('···') && <Dots>···</Dots>}
      </Bar>
    ))}
  </>
);

const faint = '#f0f0f0';
const blueLine = '#d3deea';

function Timeline() {
  return (
    <>
      <SplitRow>
        <RulerCorner>
          16s <Caret color="#222" />
        </RulerCorner>
        <Ruler>
          {Array.from({ length: 91 }, (_, i) => (
            <Tick key={i} $h={i % 4 === 2 ? 4 : 2} style={{ left: pct(3 + i * 16.64) }} />
          ))}
          {rulerLabels.map((label, i) => (
            <RulerLabel key={label} style={{ left: pct(35 + i * 133) }}>{label}</RulerLabel>
          ))}
        </Ruler>
      </SplitRow>
      <SplitRow>
        <Tree>
          {treeRows.map((r, i) => (
            <TreeRow key={i} $h={r.h} $depth={r.depth} $selected={r.selected} $dim={r.dim}>
              <Twisty>{r.open !== undefined && <Caret dir={r.open ? 'down' : 'right'} />}</Twisty>
              {r.label}
              {r.extra && (
                <svg width="28" height="12" viewBox="2 0 28 12" strokeWidth="2">
                  <path d="M2 6h10" stroke="#e8837a" />
                  <path d="M18 6h11M23.500 0v12" stroke="#7ab87e" />
                </svg>
              )}
            </TreeRow>
          ))}
        </Tree>
        <Lanes>
          <Lane $h={25} $line={faint} />
          <Lane $h={24} $line={faint}><LoadLine /></Lane>
          <Lane $h={26} $line={faint}>
            <Utilization viewBox="0 0 1503 25" preserveAspectRatio="none">
              <path
                fill="#6cb8f5"
                d="M469 12V9l1-8h8l2 8v3zM503 12V1h55v8h2V1h10v8h2V1h80l1 7 3-6h6l1 7 2-8h11l2 8v3zM728 12V1h187v8h1v3zM1344 12V1h11l1 4 3-4h20l1 7 2-7h6l1 7 2-7h10v11z"
              />
              <path fill="#05adff" d="M396 13h30v7l-2 5h-3l-1-8-1 8h-22z" />
              <path fill="#5fe30c" d="M121 13h7v4l-1 8h-6z" />
              <path fill="#ff5a4d" d="M1411 13h6v4h-2v8h-2v-8h-2z" />
            </Utilization>
          </Lane>
          <Lane $h={80} $line={faint}><Bars data={kernelBars} top={1} /></Lane>
          <Lane $h={24} $line={faint}><Bars data={kernelBars} top={3} /></Lane>
          <Lane $h={25} $line={faint} />
          <Lane $h={25} $line="#c4c4c4" />
          <Lane $h={24} $line="#fff"><CpuBand /><StateBand /></Lane>
          <Lane $h={41} $line={blueLine} />
          <Lane $h={41} $line={blueLine}>
            <Bars data={trtBars} top={1} />
            <Bars data={layerBars} top={21} />
          </Lane>
          <Lane $h={25} $line={faint}><Bars data={apiBars} top={3} /></Lane>
          <Outside $side="left" />
          <Outside $side="right" />
          <CursorLine style={{ left: pct(797) }} />
        </Lanes>
      </SplitRow>
      <ScrollRow>
        <ScrollCorner />
        <ScrollButton aria-label="Scroll left"><Caret dir="left" /></ScrollButton>
        <ScrollTrack />
        <ScrollThumb />
        <ScrollGap />
        <ScrollButton aria-label="Scroll right"><Caret dir="right" /></ScrollButton>
      </ScrollRow>
    </>
  );
}

const orange = '#fb8122';
const yellow = '#fccf18';

function Events() {
  return (
    <>
      <EventsBar>
        <Combo $w={131}>
          <select aria-label="View"><option>Events View</option></select>
          <Caret />
        </Combo>
        <Filters>
          <Combo $w={86}>
            <select aria-label="Filter column"><option>Name</option></select>
            <Caret />
          </Combo>
          <FilterInput aria-label="Filter text" />
        </Filters>
      </EventsBar>
      <EventsArea>
        <TableWrap>
          <Table>
            <colgroup>
              <col width="93" />
              <col />
              <col width="93" />
              <col width="93" />
              <col width="93" />
            </colgroup>
            <thead>
              <tr>
                <th>#</th>
                <th>Name</th>
                <th>Start</th>
                <th><SortHead>Duration <Caret dir="up" /></SortHead></th>
                <th>TID</th>
              </tr>
            </thead>
            <tbody>
              <tr>
                <td>
                  <Cell $gap={3}>
                    <Swatches><Swatch $c={orange} /></Swatches>
                    <RowNumber aria-label="Row number" defaultValue="1" />
                  </Cell>
                </td>
                <td>
                  <Cell>
                    <Caret />
                    <Cell $indent={6}>
                      <Swatches><Swatch $c={orange} /></Swatches>
                      ExecutionContext::enqueue
                    </Cell>
                  </Cell>
                </td>
                <td>16.2201s</td>
                <td>275.646 µs</td>
                <td>2932</td>
              </tr>
              {events.map(([id, name, start, duration]) => (
                <tr key={id}>
                  <td>
                    <Cell>
                      <Swatches><Swatch $c={yellow} /><Swatch $c={orange} /></Swatches>
                      {id}
                    </Cell>
                  </td>
                  <td>
                    <Cell $indent={37}>
                      <Swatches><Swatch $c={yellow} /></Swatches>
                      {name}
                    </Cell>
                  </td>
                  <td>{start}</td>
                  <td>{duration}</td>
                  <td>2932</td>
                </tr>
              ))}
            </tbody>
          </Table>
        </TableWrap>
        <Description>
          <DescriptionLabel>Description:</DescriptionLabel>
          <DescriptionBody>
            <b>ExecutionContext::enqueue</b>
            <div>Begins: 16.2201s</div>
            <div>Ends: 16.2204s (+275.646 µs)</div>
            <div>Thread: 2932</div>
          </DescriptionBody>
        </Description>
      </EventsArea>
    </>
  );
}

function PlayerControls() {
  return (
    <>
      <WaveTrack>
        <svg viewBox="0 0 1763 33" preserveAspectRatio="none">
          <defs>
            <clipPath id="played"><rect width="1689" height="33" /></clipPath>
            <clipPath id="left"><rect x="1689" width="74" height="33" /></clipPath>
          </defs>
          <g clipPath="url(#left)">
            <path d={wavePoints} fill="#4b4b4b" />
            <path d="M0 26h1763v3H0z" fill="#3a3a3a" />
            <path d="M0 29h1763v4H0z" fill="#262626" />
          </g>
          <g clipPath="url(#played)">
            <path d={wavePoints} fill="#3f5f6b" />
            <path d="M0 26h1763v3H0z" fill="#2c4a57" />
            <path d="M0 29h1763v4H0z" fill="#003f5c" />
          </g>
          <path d="M1687 15h2v14h-2z" fill="#6b9299" />
          <path d="M1761 11h1.500v16h-1.500z" fill="#fff" />
          <path d="M1764 12l6 5-6 5zM1758 20l3-4v6l-2 3z" fill="#fff" />
        </svg>
        <input type="range" aria-label="Playback position" min={0} max={1436} defaultValue={1375} />
      </WaveTrack>
      <Controls>
        <ControlButton $width={46} aria-label="Previous"><MdSkipPrevious size={32} /></ControlButton>
        <ControlButton $width={60} aria-label="Play"><PlayIcon /></ControlButton>
        <ControlButton $width={48} aria-label="Next"><MdSkipNext size={32} /></ControlButton>
        <Time>22:55 / 23:56</Time>
        <ControlButton $width={42} aria-label="Toggle comments"><DanmakuIcon mark="check" /></ControlButton>
        <ControlButton $width={42} aria-label="Comment settings"><DanmakuIcon mark="gear" /></ControlButton>
        <Danmaku onSubmit={e => e.preventDefault()}>
          <FontMark>
            <svg width="16" height="18" viewBox="0 0 16 18" fill="none" stroke="#1b1b1b" strokeWidth="2">
              <path d="M3 13L8 1l5 12M5 9h6M0 17h16" />
            </svg>
          </FontMark>
          <DanmakuInput aria-label="弹幕" placeholder="发个友善的弹幕见证当下" />
          <Etiquette href="#">
            弹幕礼仪
            <svg width="6" height="10" viewBox="0 0 6 10">
              <path d="M1 0l4 5-4 5" fill="none" stroke="#1b1b1b" strokeWidth="1.500" />
            </svg>
          </Etiquette>
          <Send>发送</Send>
        </Danmaku>
        <RightControls>
          <TextControls>
            <TextControl>1080P 高清</TextControl>
            <TextControl>选集</TextControl>
            <TextControl>1.25x</TextControl>
          </TextControls>
          <ControlButton $width={54} aria-label="Subtitles"><SubtitleOff /></ControlButton>
          <ControlButton $width={54} aria-label="Volume"><MdVolumeUp size={26} /></ControlButton>
          <ControlButton $width={54} aria-label="Settings"><GearIcon /></ControlButton>
          <ControlButton $width={54} aria-label="Picture in picture"><PipIcon /></ControlButton>
          <ControlButton $width={54} aria-label="Wide mode"><WideIcon /></ControlButton>
          <ControlButton $width={54} aria-label="Full page"><GridIcon /></ControlButton>
          <ControlButton $width={54} aria-label="Full screen"><FanIcon /></ControlButton>
        </RightControls>
      </Controls>
    </>
  );
}

export default function App() {
  return (
    <Desktop>
      <Global />
      <Window>
        <Browser />
        <Stage>
          <VideoHead>
            <VideoTitle>TensorRT 教程 | 基于 8.2.3 版本 | 第二部分</VideoTitle>
            <HelpBubble />
          </VideoHead>
          <Uploader>
            <Nvidia />
            <FollowButton>
              <svg width="10" height="10" viewBox="0 0 10 10">
                <path d="M5 0v10M0 5h10" stroke="#353535" />
              </svg>
              关注
            </FollowButton>
          </Uploader>
          <SlideTitle>
            <Bullet />
            nsight systems
          </SlideTitle>
          <Profiler>
            <Timeline />
            <CursorAnchor>
              <CursorTime style={{ left: pct(797) }}>16s 220.3857ms</CursorTime>
            </CursorAnchor>
            <Events />
            <CalloutLeft $w={198}>
              当前展示各 Layer 信息
              <Pointer $dir="down" />
            </CalloutLeft>
            <CalloutRight $w={184}>
              按耗时降序排列
              <Pointer $dir="up" />
            </CalloutRight>
          </Profiler>
          <CaptionRow>
            <Caption>
              <ListArrow />
              <p>
                列出 TensorRT 的 NVTX（在 TensorRT 那一行右键选择 <WideQuote>“</WideQuote>show in events<WideQuote>”</WideQuote>）
              </p>
            </Caption>
            <TvLogo />
          </CaptionRow>
          <PlayerControls />
        </Stage>
      </Window>
    </Desktop>
  );
}
